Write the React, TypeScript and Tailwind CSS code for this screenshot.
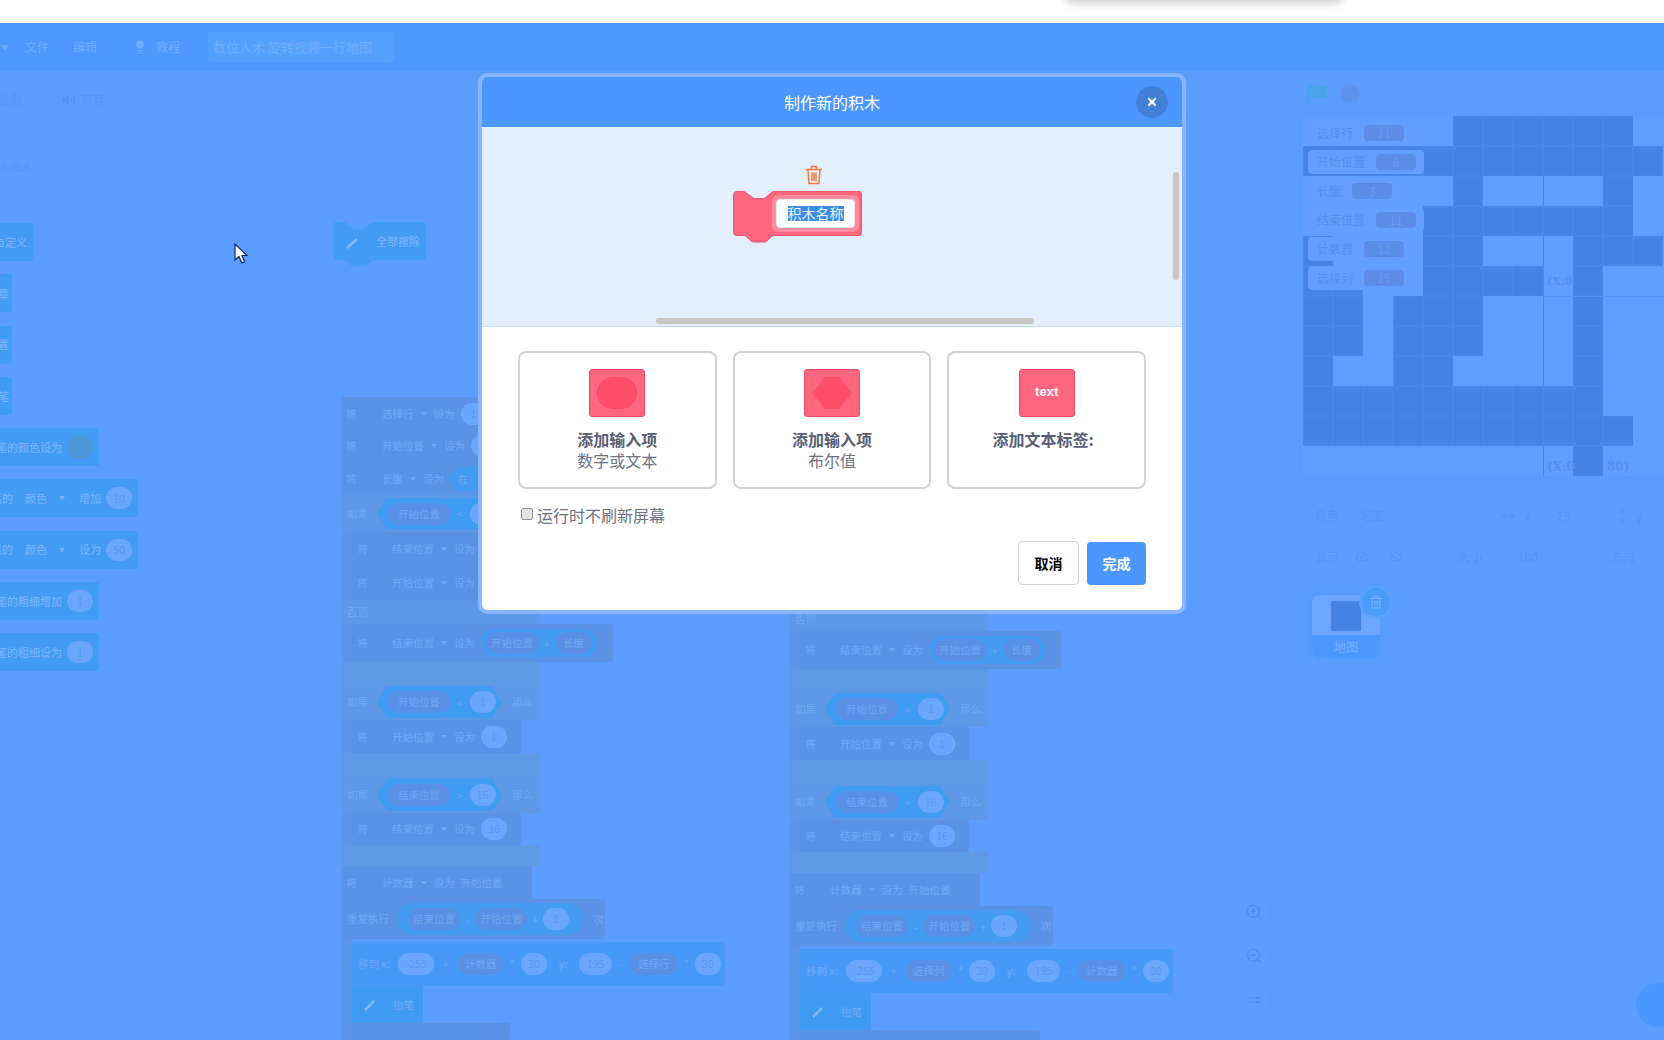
import { ReactNode } from "react";
import { X, Volume2, Lightbulb, Eye, EyeOff, ZoomIn, ZoomOut, Equal, MoveHorizontal, MoveVertical, Trash2 } from "lucide-react";

// dark cells of the stage, one list per row
const stageRows = [
  [5, 6, 7, 8, 9, 10],
  [0, 1, 2, 3, 4, 5, 6, 7, 8, 9, 10, 11],
  [5, 10],
  [4, 5, 6, 7, 8, 9, 10],
  [0, 4, 5, 9, 10, 11],
  [0, 1, 4, 5, 6, 7, 9],
  [0, 1, 3, 4, 5, 9],
  [0, 1, 3, 4, 5, 9],
  [0, 3, 4, 9],
  [0, 1, 2, 3, 4, 5, 6, 7, 8, 9],
  [0, 1, 2, 3, 4, 5, 6, 7, 8, 9, 10],
  [9],
];

const monitors = [
  { name: "选择行", value: "11", width: "w-[105px]" },
  { name: "开始位置", value: "8", width: "w-[116px]" },
  { name: "长度", value: "3", width: "w-[92px]" },
  { name: "结束位置", value: "11", width: "w-[116px]" },
  { name: "计数器", value: "12", width: "w-[105px]" },
  { name: "选择列", value: "15", width: "w-[105px]" },
];

function Label({ children, className }: { children: ReactNode; className?: string }) {
  return <span className={`whitespace-nowrap text-[10.5px] text-[#72a8f3] ${className ?? ""}`}>{children}</span>;
}

function VarPill({ children, w = "w-[58px]" }: { children: ReactNode; w?: string }) {
  return (
    <span className={`flex h-[22px] ${w} shrink-0 items-center justify-center rounded-full bg-[#5a8fe6] text-[10.5px] whitespace-nowrap text-[#72a6f0]`}>
      {children}
    </span>
  );
}

function NumPill({ children, w = "w-[26px]" }: { children: ReactNode; w?: string }) {
  return (
    <span className={`flex h-[22px] ${w} shrink-0 items-center justify-center rounded-full bg-[#69a7ff] text-[10.5px] text-[#5a96ec]`}>
      {children}
    </span>
  );
}

function Caret() {
  return <span className="mx-[7px] h-0 w-0 border-x-[3px] border-t-[4px] border-x-transparent border-t-[#72a8f3]" />;
}

function SetRow({ name, value, inner = true }: { name: string; value?: ReactNode; inner?: boolean }) {
  return (
    <div className="flex h-full items-center pl-[5px]">
      <Label className={inner ? "w-[35px]" : "w-[36px]"}>将</Label>
      <Label>{name}</Label>
      <Caret />
      <Label className="mr-[6px]">设为</Label>
      {value}
    </div>
  );
}

function IfRow({ name, op, value }: { name: string; op: string; value: string }) {
  return (
    <div className="flex h-full items-center pl-[6px]">
      <Label className="w-[30px]">如果</Label>
      <div className="flex h-[32px] w-[125px] items-center bg-[#409bf3] pl-[11px] [clip-path:polygon(8%_0,92%_0,100%_50%,92%_100%,8%_100%,0_50%)]">
        <VarPill w="w-[62px]">{name}</VarPill>
        <span className="mx-[7px] text-[10px] text-[#72a8f3]">{op}</span>
        <NumPill>{value}</NumPill>
      </div>
      <Label className="ml-[10px]">那么</Label>
    </div>
  );
}

function Row({ h, w, inner, bg = "bg-[#5a93e6]", children }: { h: string; w: string; inner?: boolean; bg?: string; children?: ReactNode }) {
  return <div className={`${h} ${w} ${inner ? "ml-[11px] rounded-r-[3px]" : "rounded-r-[3px]"} ${bg}`}>{children}</div>;
}

function Script({ first, second, lastWidth }: { first: string; second: string; lastWidth: string }) {
  return (
    <div className="relative flex flex-col">
      <div className="absolute top-0 bottom-[-40px] left-0 w-[11px] bg-[#5b96e6]" />
      <div className="relative flex flex-col">
        <Row h="h-[33px]" w="w-[199px]"><SetRow inner={false} name="选择行" value={<NumPill>1</NumPill>} /></Row>
        <Row h="h-[32px]" w="w-[199px]"><SetRow inner={false} name="开始位置" value={<NumPill>1</NumPill>} /></Row>
        <Row h="h-[33px]" w="w-[199px]">
          <SetRow inner={false} name="长度" value={
            <span className="flex h-[24px] w-[60px] items-center rounded-full bg-[#439cf2] pl-[8px] text-[10.5px] text-[#72a8f3]">在</span>
          } />
        </Row>
        <Row h="h-[37px]" w="w-[199px]" bg="bg-[#5c98e6]"><IfRow name="开始位置" op="<" value="1" /></Row>
        <Row inner h="h-[33px]" w="w-[169px]"><SetRow name="结束位置" value={<NumPill>1</NumPill>} /></Row>
        <Row inner h="h-[35px]" w="w-[169px]"><SetRow name="开始位置" value={<NumPill>1</NumPill>} /></Row>
        <Row h="h-[24px]" w="w-[199px]" bg="bg-[#5c98e6]"><div className="flex h-full items-center pl-[6px]"><Label>否则</Label></div></Row>
        <Row inner h="h-[38px]" w="w-[261px]">
          <SetRow name="结束位置" value={
            <span className="flex h-[28px] items-center rounded-full bg-[#439cf2] px-[5px]">
              <VarPill w="w-[52px]">开始位置</VarPill>
              <span className="mx-[6px] text-[10px] text-[#72a8f3]">+</span>
              <VarPill w="w-[36px]">长度</VarPill>
            </span>
          } />
        </Row>
        <Row h="h-[22px]" w="w-[199px]" bg="bg-[#5e99e6]" />
        <Row h="h-[36px]" w="w-[199px]" bg="bg-[#5c98e6]"><IfRow name="开始位置" op="<" value="1" /></Row>
        <Row inner h="h-[33px]" w="w-[169px]"><SetRow name="开始位置" value={<NumPill>1</NumPill>} /></Row>
        <Row h="h-[24px]" w="w-[199px]" bg="bg-[#5e99e6]" />
        <Row h="h-[36px]" w="w-[199px]" bg="bg-[#5c98e6]"><IfRow name="结束位置" op=">" value="16" /></Row>
        <Row inner h="h-[32px]" w="w-[169px]"><SetRow name="结束位置" value={<NumPill>16</NumPill>} /></Row>
        <Row h="h-[21px]" w="w-[199px]" bg="bg-[#5e99e6]" />
        <Row h="h-[33px]" w="w-[191px]">
          <SetRow inner={false} name="计数器" value={<Label>开始位置</Label>} />
        </Row>
        <Row h="h-[40px]" w="w-[264px]">
          <div className="flex h-full items-center pl-[6px]">
            <Label className="w-[50px]">重复执行</Label>
            <span className="flex h-[32px] w-[186px] items-center rounded-full bg-[#439cf2] px-[11px]">
              <VarPill w="w-[52px]">结束位置</VarPill>
              <span className="mx-[6px] text-[10px] text-[#72a8f3]">-</span>
              <VarPill w="w-[52px]">开始位置</VarPill>
              <span className="mx-[5px] text-[10px] text-[#72a8f3]">+</span>
              <NumPill>1</NumPill>
            </span>
            <Label className="ml-[10px]">次</Label>
          </div>
        </Row>
        <div className="h-[3px]" />
        <Row inner h="h-[44px]" w="w-[373px]" bg="bg-[#4799f8]">
          <div className="flex h-full items-center pl-[6px]">
            <Label className="w-[40px]">移到 x:</Label>
            <NumPill w="w-[36px]">-255</NumPill>
            <Label className="mx-[9px]">+</Label>
            <VarPill w="w-[46px]">{first}</VarPill>
            <Label className="mx-[6px]">*</Label>
            <NumPill>30</NumPill>
            <Label className="mx-[12px]">y:</Label>
            <NumPill w="w-[33px]">195</NumPill>
            <Label className="mx-[7px]">-</Label>
            <VarPill w="w-[48px]">{second}</VarPill>
            <Label className="mx-[6px]">*</Label>
            <NumPill>30</NumPill>
          </div>
        </Row>
        <Row inner h="h-[37px]" w="w-[71px]" bg="bg-[#3f9bf2]">
          <div className="flex h-full items-center pl-[11px]">
            <svg width="14" height="14" viewBox="0 0 14 14" className="mr-[16px]">
              <path d="M2 12 L11 3" stroke="#84b8f8" strokeWidth="2.5" />
            </svg>
            <Label>抬笔</Label>
          </div>
        </Row>
        <Row inner h="h-[17px]" w={lastWidth} />
      </div>
    </div>
  );
}

// block silhouette with the notch on top and the bump below
function BlockShape({ width, height, fill, stroke }: { width: number; height: number; fill: string; stroke?: string }) {
  const r = width - 0.5;
  const b = height - 0.5;
  const d = `M3.5 0.5 H10 Q12 0.5 13.5 2 L20 7 Q21 7.5 22 7.5 H30 Q31 7.5 32 7 L38 2 Q39.5 0.5 41 0.5 H${width - 3} Q${r} 0.5 ${r} 3 V${b - 3} Q${r} ${b} ${width - 3} ${b} H41 Q39.5 ${b} 38 ${b + 1.5} L34 ${b + 5.5} Q33 ${b + 6.5} 31 ${b + 6.5} H21 Q19 ${b + 6.5} 18 ${b + 5.5} L14 ${b + 1.5} Q12.5 ${b} 11 ${b} H3.5 Q0.5 ${b} 0.5 ${b - 3} V3.5 Q0.5 0.5 3.5 0.5 Z`;
  return (
    <svg width={width} height={height + 7} className="absolute top-0 left-0">
      <path d={d} fill={fill} stroke={stroke ?? fill} />
    </svg>
  );
}

function PaletteBlock({ w, children }: { w: string; children?: ReactNode }) {
  return (
    <div className={`flex h-[38px] ${w} items-center justify-end overflow-hidden rounded-r-[3px] bg-[#439cf4] pr-[6px] text-[11px] whitespace-nowrap text-[#7fb5fd]`}>
      {children}
    </div>
  );
}

function PalettePill({ children, bg = "bg-[#69a7ff]" }: { children?: ReactNode; bg?: string }) {
  return (
    <span className={`ml-[5px] flex h-[22px] w-[26px] shrink-0 items-center justify-center rounded-full ${bg} text-[11px] text-[#5a96ec]`}>
      {children}
    </span>
  );
}

function OptionCard({ title, sub, children }: { title: string; sub?: string; children: ReactNode }) {
  return (
    <div className="flex h-[138px] flex-1 flex-col items-center rounded-[8px] border-2 border-[#d2d2d2] bg-white pt-[16px]">
      <div className="flex h-[48px] w-[56px] items-center justify-center rounded-[3px] border border-[#e64d69] bg-[#ff6680]">
        {children}
      </div>
      <div className="mt-[11px] text-[16px] leading-[22px] font-bold text-[#575e75]">{title}</div>
      {sub && <div className="text-[16px] leading-[20px] text-[#6e7282]">{sub}</div>}
    </div>
  );
}

export default function App() {
  return (
    <div className="relative h-[1040px] w-[1664px] overflow-hidden bg-[#5b9dff] font-['Noto_Sans_CJK_SC','Noto_Sans',sans-serif]">
      {/* white strip on top with the end of a dropdown */}
      <div className="relative h-[23px] overflow-hidden bg-white">
        <div className="absolute -top-[6px] left-[1070px] h-[6px] w-[268px] shadow-[0_0_8px_3px_rgba(0,0,0,0.2)]" />
      </div>

      {/* menu bar */}
      <div className="flex h-[48px] items-center bg-[#4d97ff] text-[12px] text-[#72adff]">
        <span className="ml-[1px] h-0 w-0 border-x-[4px] border-t-[5px] border-x-transparent border-t-[#72adff]" />
        <span className="ml-[16px]">文件</span>
        <span className="ml-[24px]">编辑</span>
        <Lightbulb size={14} className="ml-[36px]" fill="#72adff" />
        <span className="ml-[9px]">教程</span>
        <div className="ml-[28px] flex h-[30px] w-[186px] items-center rounded-[4px] bg-[#55a0ff] pl-[5px] text-[13px] whitespace-nowrap">
          数位人术 旋转视频一行地图
        </div>
      </div>

      <div className="flex h-[969px]">
        {/* palette and workspace */}
        <div className="flex w-[1297px] shrink-0 flex-col">
          <div className="flex h-[45px] items-end border-b border-[#5c9bf8] text-[12px] text-[#5594f2]">
            <div className="flex h-[34px] w-[42px] items-center justify-end border-r border-[#5c9bf8] pt-[3px] pr-[19px] whitespace-nowrap">造型</div>
            <div className="flex h-[34px] w-[84px] items-center justify-center gap-[5px] border-r border-[#5c9bf8] pt-[3px] whitespace-nowrap">
              <Volume2 size={14} fill="#5594f2" />
              声音
            </div>
          </div>
          <div className="flex flex-1">
            <div className="flex w-[182px] flex-col border-r border-[#5a9cfb] pt-[43px]">
              <div className="flex h-[16px] w-[32px] items-center justify-end text-[10.5px] whitespace-nowrap text-[#5594f2]">的积木</div>
              <div className="mt-[48px] flex flex-col gap-[13.25px]">
                <PaletteBlock w="w-[33px]">自定义</PaletteBlock>
                <PaletteBlock w="w-[12px]"><span className="-mr-[3px]">章</span></PaletteBlock>
                <PaletteBlock w="w-[12px]"><span className="-mr-[3px]">置</span></PaletteBlock>
                <PaletteBlock w="w-[12px]"><span className="-mr-[3px]">笔</span></PaletteBlock>
                <PaletteBlock w="w-[99px]">笔的颜色设为<PalettePill bg="bg-[#4d97d8]" /></PaletteBlock>
                <PaletteBlock w="w-[138px]">
                  笔的<span className="mx-[12px]">颜色</span><span className="mr-[14px] h-0 w-0 border-x-[3px] border-t-[4px] border-x-transparent border-t-[#7fb5fd]" />增加<PalettePill>10</PalettePill>
                </PaletteBlock>
                <PaletteBlock w="w-[138px]">
                  笔的<span className="mx-[12px]">颜色</span><span className="mr-[14px] h-0 w-0 border-x-[3px] border-t-[4px] border-x-transparent border-t-[#7fb5fd]" />设为<PalettePill>50</PalettePill>
                </PaletteBlock>
                <PaletteBlock w="w-[99px]">笔的粗细增加<PalettePill>1</PalettePill></PaletteBlock>
                <PaletteBlock w="w-[99px]">笔的粗细设为<PalettePill>1</PalettePill></PaletteBlock>
              </div>
            </div>

            {/* scripts sit on a free canvas */}
            <div className="relative flex-1">
              <div className="absolute top-[106px] left-[151px] h-[45px] w-[93px]">
                <BlockShape width={93} height={38} fill="#439cf4" />
                <svg width="14" height="14" viewBox="0 0 14 14" className="absolute top-[14px] left-[12px]">
                  <path d="M2 12 L12 3" stroke="#84b8f8" strokeWidth="2.5" />
                </svg>
                <span className="absolute top-[11px] left-[43px] text-[11px] whitespace-nowrap text-[#7fb5fd]">全部擦除</span>
              </div>
              <div className="absolute top-[281px] left-[159px]">
                <Script first="计数器" second="选择行" lastWidth="w-[158px]" />
              </div>
              <div className="absolute top-[288px] left-[607px]">
                <Script first="选择列" second="计数器" lastWidth="w-[240px]" />
              </div>
              <div className="absolute top-[183px] right-[8px] h-[466px] w-[6px] rounded-full bg-[#5a9bfc]" />
              <div className="absolute top-[790px] left-[-12px] h-[180px] w-[6px] rounded-full bg-[#5a9bfc]" />
              <div className="absolute top-[779px] right-[26px] flex flex-col gap-[10px]">
                {[ZoomIn, ZoomOut, Equal].map((Icon, i) => (
                  <div key={i} className="flex h-[34px] w-[34px] items-center justify-center rounded-full border border-[#5a9cfd] bg-[#5c9eff]">
                    <Icon size={18} className="text-[#4f90ef]" />
                  </div>
                ))}
              </div>
            </div>
          </div>
        </div>

        {/* stage column */}
        <div className="flex min-w-0 flex-1 flex-col pl-[6px]">
          <div className="flex h-[45px] items-center gap-[12px] pl-[3px]">
            <svg width="22" height="22" viewBox="0 0 22 22">
              <path d="M2 1 V21 M3 3 Q8 1 12 3 T20 3 V14 Q15 16 11 14 T3 14 Z" fill="#4ba3e6" stroke="#4ba3e6" strokeWidth="1.5" />
            </svg>
            <span className="h-[20px] w-[20px] rounded-full bg-[#5f92ee]" />
          </div>

          <div className="relative h-[360px] bg-[#5f9fff]">
            <div className="grid grid-cols-[repeat(12,30px)] auto-rows-[30px]">
              {stageRows.map((row, r) =>
                Array.from({ length: 12 }, (_, c) => (
                  <div key={`${r}-${c}`} className={row.includes(c) ? "border border-[#4888e8] bg-[#4484e4]" : ""} />
                ))
              )}
            </div>
            <div className="absolute top-[60px] left-[240px] h-[300px] w-px bg-[#4a88e8]" />
            <div className="absolute top-[180px] left-[240px] h-px w-[130px] bg-[#5593f5]" />
            <span className="absolute top-[158px] left-[244px] font-['DejaVu_Serif',serif] text-[11px] font-bold text-[#5590ec]">(X:0</span>
            <span className="absolute top-[342px] left-[244px] font-['DejaVu_Serif',serif] text-[12px] font-bold text-[#5590ec]">(X:0</span>
            <span className="absolute top-[342px] left-[304px] font-['DejaVu_Serif',serif] text-[12px] font-bold text-[#5590ec]">80)</span>
            <div className="absolute top-[5px] left-[5px] flex flex-col gap-[5px]">
              {monitors.map((m) => (
                <div key={m.name} className={`flex h-[24px] ${m.width} items-center rounded-[4px] bg-[#639fff] pl-[9px] text-[12px] text-[#5390ec]`}>
                  <span className="whitespace-nowrap">{m.name}</span>
                  <span className="ml-[11px] flex h-[16px] w-[40px] shrink-0 items-center justify-center rounded-[4px] bg-[#5a8ce8] text-[12px] text-[#699de9]">
                    {m.value}
                  </span>
                </div>
              ))}
            </div>
          </div>

          <div className="mt-[12px] h-[97px] w-[380px] rounded-[6px] border border-[#5a9cfc] bg-[#5c9eff] pt-[17px] text-[12px] whitespace-nowrap text-[#5594f2]">
            <div className="flex h-[20px] items-center pl-[11px]">
              <span>角色</span>
              <span className="ml-[21px]">地图</span>
              <MoveHorizontal size={16} className="ml-[118px]" />
              <span className="ml-[10px]">x</span>
              <span className="ml-[26px]">75</span>
              <MoveVertical size={16} className="ml-[46px]" />
              <span className="ml-[8px]">y</span>
              <span className="ml-[22px]">-90</span>
            </div>
            <div className="mt-[14px] flex h-[34px] items-center pl-[11px]">
              <span>显示</span>
              <span className="ml-[7px] flex h-[32px] w-[34px] items-center justify-center rounded-l-[4px] border border-[#5a9cfc]"><Eye size={14} /></span>
              <span className="flex h-[32px] w-[34px] items-center justify-center rounded-r-[4px] border border-[#5a9cfc]"><EyeOff size={14} /></span>
              <span className="ml-[47px]">大小</span>
              <span className="ml-[33px] flex h-[32px] items-center border-b border-[#5a9cfc] px-[2px]">100</span>
              <span className="ml-[71px]">方向</span>
              <span className="ml-[34px]">90</span>
            </div>
          </div>

          <div className="relative mt-[10px] ml-[9px] h-[63px] w-[68px] rounded-[8px] bg-[#6ba6ff] shadow-[0_0_4px_3px_#559bff]">
            <div className="mx-auto mt-[6px] h-[30px] w-[30px] bg-[#4484e4]" />
            <div className="absolute right-0 bottom-0 left-0 flex h-[23px] items-center justify-center rounded-b-[8px] bg-[#4d97ff] text-[12px] text-[#79b2ff]">地图</div>
            <div className="absolute -top-[7px] -right-[10px] flex h-[28px] w-[28px] items-center justify-center rounded-full bg-[#4c9bfb] shadow-[0_0_0_3px_#5aa2fd]">
              <Trash2 size={14} className="text-[#79b2ff]" />
            </div>
          </div>
        </div>
      </div>

      <div className="absolute top-[983px] left-[1636px] h-[44px] w-[44px] rounded-full bg-[#4b97ff]" />

      {/* mouse pointer */}
      <svg width="14" height="22" viewBox="0 0 14 22" className="absolute top-[243px] left-[234px]">
        <path d="M1 1 V17 L5 13.5 L7.8 20 L10.6 18.8 L8 12.5 L13 12.5 Z" fill="#fff" stroke="#0d2a5c" strokeWidth="1.2" />
      </svg>

      {/* dialog */}
      <div className="absolute inset-x-0 top-[73px] mx-auto w-[708px] overflow-hidden rounded-[9px] border-4 border-[#85b6ff] bg-white">
        <div className="relative flex h-[50px] items-center justify-center bg-[#4c97ff] text-[16px] text-white">
          制作新的积木
          <button className="absolute top-[9px] right-[14px] flex h-[32px] w-[32px] items-center justify-center rounded-full bg-[#4280d7]">
            <X size={12} strokeWidth={4.5} className="text-white" />
          </button>
        </div>

        <div className="relative h-[200px] border-b border-[#c6daf0] bg-[#e3effd]">
          <svg width="18" height="20" viewBox="0 0 18 20" className="absolute top-[38px] left-[323px]">
            <path d="M1 4.5 H17 M6.5 4 V1.5 H11.5 V4 M3 5 L4 18.5 H14 L15 5 M7 7.5 V16 M9 7.5 V16 M11 7.5 V16" fill="none" stroke="#f37a3c" strokeWidth="1.5" />
          </svg>
          <div className="absolute top-[64px] left-[251px] h-[52px] w-[129px]">
            <BlockShape width={129} height={45} fill="#ff6680" stroke="#f0556f" />
            <div className="absolute top-[4px] left-[39px] flex h-[37px] w-[87px] items-center justify-center rounded-[6px] bg-[#ff8a9e]">
              <div className="flex h-[29px] w-[79px] items-center justify-center rounded-[4px] border border-[#e8e8e8] bg-white">
                <span className="bg-[#3b8ee6] text-[14px] leading-[15px] text-[#eaf3ff]">积木名称</span>
              </div>
            </div>
          </div>
          <div className="absolute top-[45px] right-[3px] h-[108px] w-[6px] rounded-full bg-[#c8c8c8]" />
          <div className="absolute bottom-[2px] left-[174px] h-[6px] w-[378px] rounded-full bg-[#c8c8c8]" />
        </div>

        <div className="h-[283px] px-[36px] pt-[24px]">
          <div className="flex gap-[16px]">
            <OptionCard title="添加输入项" sub="数字或文本">
              <span className="h-[32px] w-[40px] rounded-full border border-[#f04a66] bg-[#ff4d6a]" />
            </OptionCard>
            <OptionCard title="添加输入项" sub="布尔值">
              <span className="h-[32px] w-[40px] bg-[#ff4d6a] [clip-path:polygon(33%_0,67%_0,100%_50%,67%_100%,33%_100%,0_50%)]" />
            </OptionCard>
            <OptionCard title={"添加文本标签:\u00a0\u00a0"}>
              <span className="-mt-[3px] font-['Liberation_Sans',sans-serif] text-[13px] font-bold text-white">text</span>
            </OptionCard>
          </div>
          <label className="mt-[18px] flex h-[16px] items-center text-[16px] text-[#6e7282]">
            <input type="checkbox" className="-mt-[2px] ml-[3px] h-[12px] w-[12px] appearance-none rounded-[2px] border border-[#8f8f8f] bg-[#e4e4e4]" />
            <span className="ml-[4px]">运行时不刷新屏幕</span>
          </label>
          <div className="mt-[18px] flex items-center justify-end gap-[8px]">
            <button className="h-[44px] w-[61px] rounded-[4px] border border-[#d2d2d2] bg-white text-[14px] font-bold text-black">取消</button>
            <button className="h-[43px] w-[59px] rounded-[4px] bg-[#4c97ff] text-[14px] font-bold text-white">完成</button>
          </div>
        </div>
      </div>
    </div>
  );
}
